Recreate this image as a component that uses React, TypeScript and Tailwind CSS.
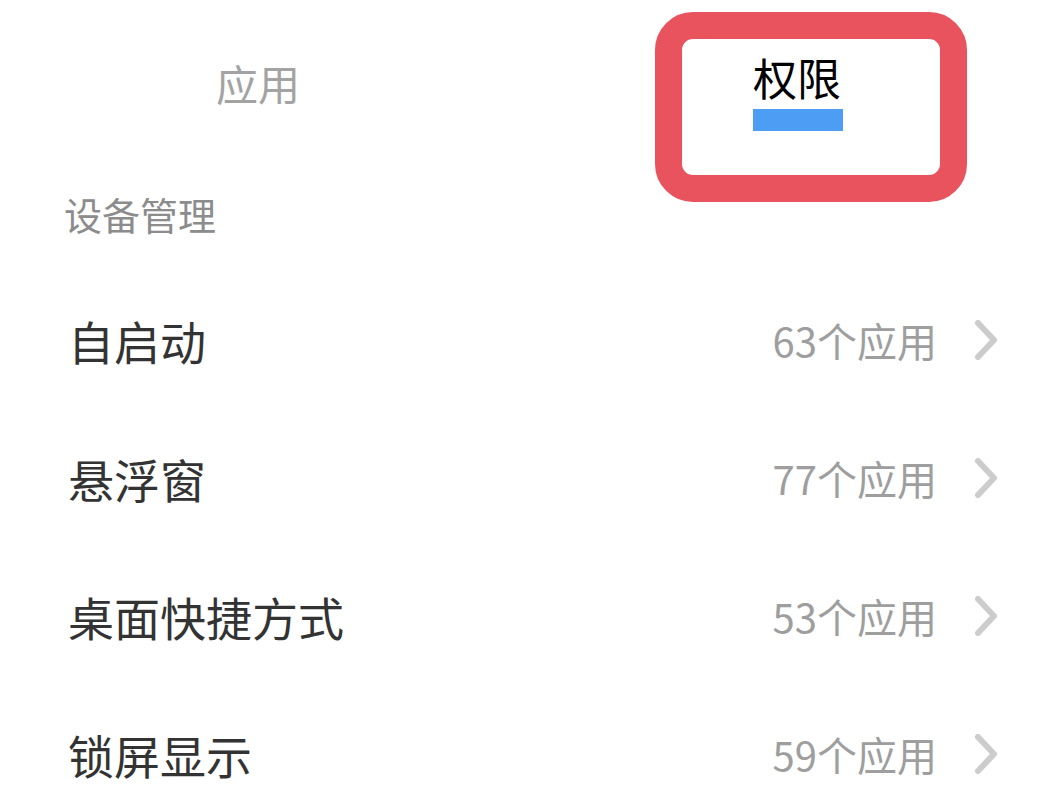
const rows = [
  { name: '自启动', count: '63个应用' },
  { name: '悬浮窗', count: '77个应用' },
  { name: '桌面快捷方式', count: '53个应用' },
  { name: '锁屏显示', count: '59个应用' },
];

function Chevron() {
  return (
    <svg width="24" height="40" viewBox="0 0 24 40" fill="none">
      <polyline
        points="4,3 20,20 4,37"
        stroke="#cccccc"
        strokeWidth="6"
        strokeLinecap="round"
        strokeLinejoin="round"
      />
    </svg>
  );
}

export default function App() {
  return (
    <div
      className="w-[1064px] h-[796px] overflow-hidden bg-white"
      style={{ fontFamily: '"Noto Sans CJK SC", "Noto Sans", sans-serif' }}
    >
      {/* tabs */}
      <div className="flex h-[195px] pt-[12px]">
        <div className="w-[532px] flex justify-center pr-[16px] pt-[50px]">
          <span className="text-[42px] leading-none text-[#a3a3a3]">应用</span>
        </div>
        <div className="ml-[123px] w-[312px] h-[190px] shrink-0 rounded-[38px] border-[27px] border-[#e8535d] bg-white">
          <div className="flex flex-col items-start pl-[71px] pt-[16px]">
            <span className="text-[44px] leading-none text-black">权限</span>
            <div className="mt-[10px] w-[90px] h-[22px] bg-[#4d9df5]" />
          </div>
        </div>
      </div>

      {/* section title */}
      <div className="pl-[64px] text-[38px] leading-none text-[#8c8c8c]">设备管理</div>

      {/* rows */}
      <div className="mt-[38px] flex flex-col">
        {rows.map((r) => (
          <div key={r.name} className="h-[138px] flex items-center justify-between pl-[68px] pr-[66px]">
            <span className="text-[46px] leading-none text-[#333333]">{r.name}</span>
            <div className="flex items-center gap-[37px]">
              <span className="text-[40px] leading-none text-[#9e9e9e]">{r.count}</span>
              <Chevron />
            </div>
          </div>
        ))}
      </div>
    </div>
  );
}
